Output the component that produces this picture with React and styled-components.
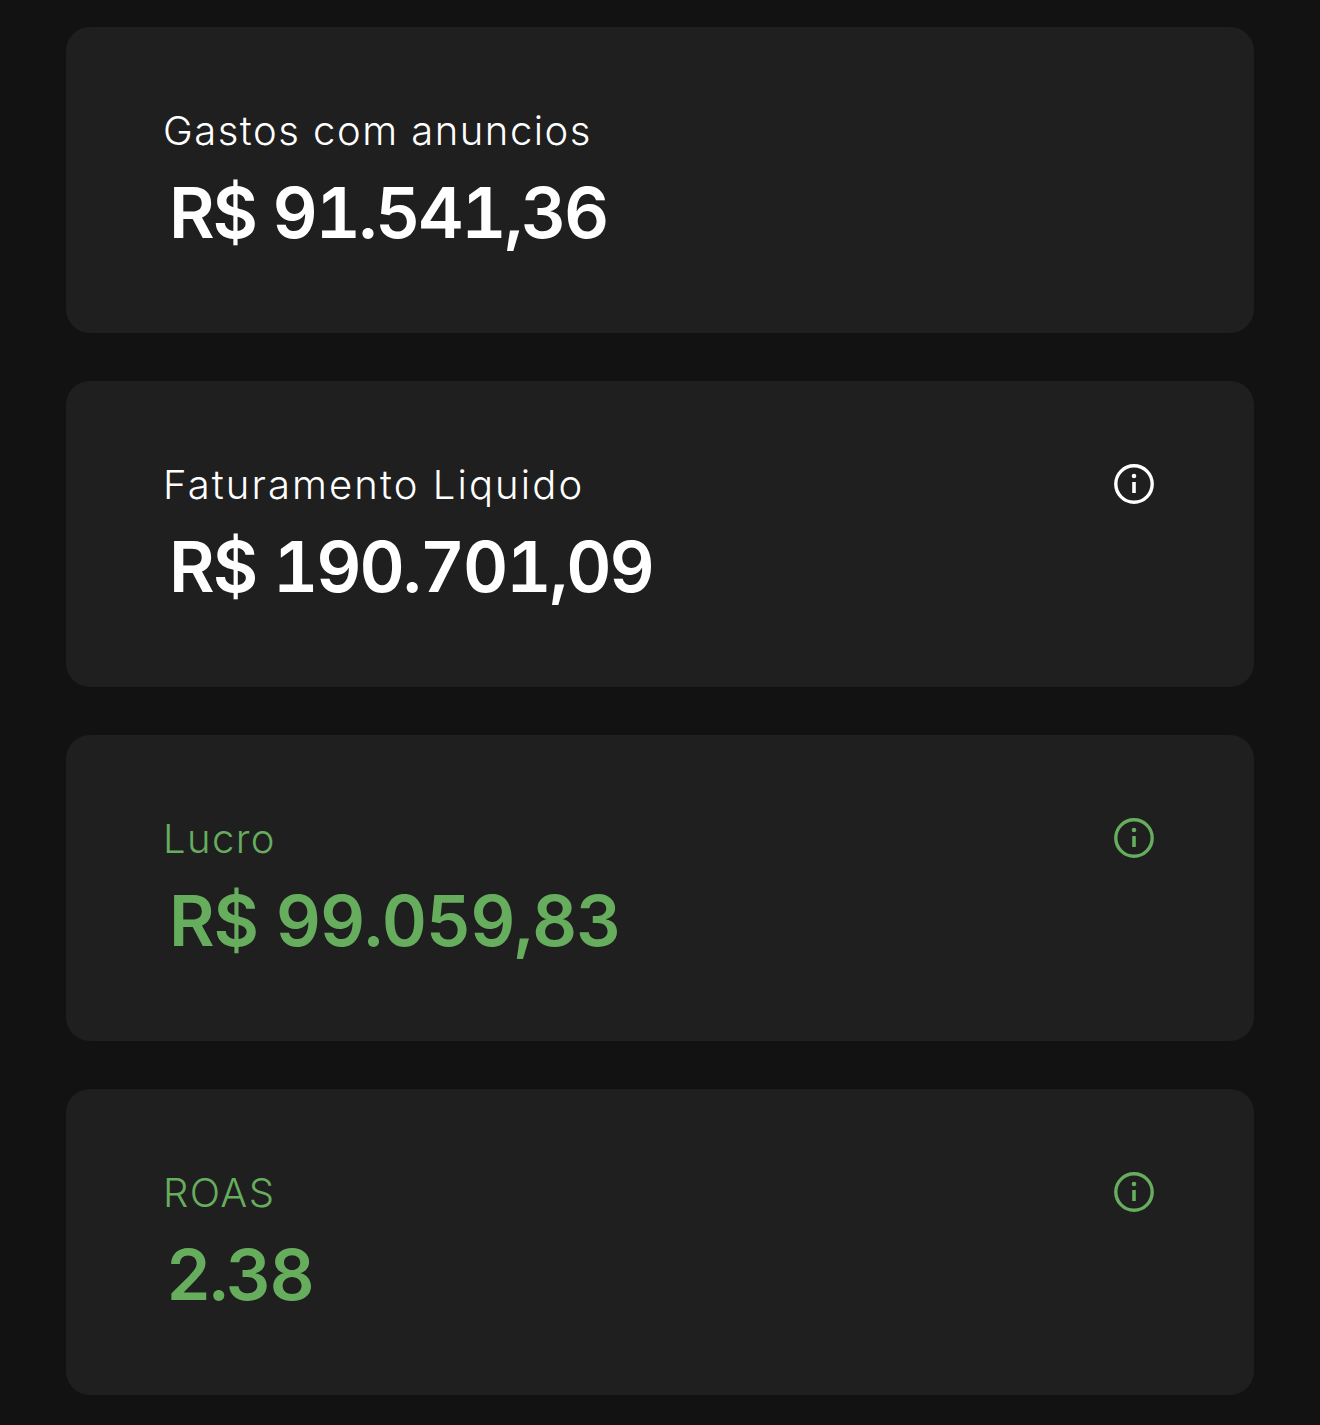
import React from 'react';
import styled, { createGlobalStyle } from 'styled-components';

const GlobalStyle = createGlobalStyle`
  html, body {
    margin: 0;
    padding: 0;
    background: #121212;
  }
`;

const Page = styled.main`
  box-sizing: border-box;
  width: 1320px;
  height: 1425px;
  overflow: hidden;
  padding: 27.4px 66px 0;
  display: flex;
  flex-direction: column;
  gap: 48px;
  background: #121212;
  font-family: Inter, "Liberation Sans", sans-serif;
`;

const Card = styled.section`
  box-sizing: border-box;
  height: 306px;
  border-radius: 24px;
  background: #1f1f1f;
  padding: 80px 100px 0 97px;
  color: ${({ $green }) => ($green ? '#66ad5e' : '#ffffff')};
`;

const TopRow = styled.div`
  display: flex;
  align-items: center;
  justify-content: space-between;
  height: 46px;
`;

const Label = styled.span`
  padding-top: 2px;
  font-size: 40px;
  font-weight: 300;
  letter-spacing: ${({ $tracking }) => $tracking}px;
  line-height: 46px;
`;

const Value = styled.div`
  margin-top: 18px;
  padding-left: ${({ $inset }) => $inset}px;
  font-size: 70px;
  font-weight: 600;
  line-height: 84px;
  font-variant-numeric: tabular-nums;
  letter-spacing: ${({ $tracking }) => $tracking}px;
`;

const InfoIcon = () => (
  <svg width="40" height="40" viewBox="0 0 40 40" fill="none" stroke="currentColor">
    <circle cx="20" cy="20" r="18.2" strokeWidth="3.4" />
    <path d="M20 18v11" strokeWidth="3.6" />
    <circle cx="20" cy="12" r="2.3" fill="currentColor" stroke="none" />
  </svg>
);

const cards = [
  { label: 'Gastos com anuncios', tracking: 1.5, value: 'R$ 91.541,36', valueTracking: -2.2, inset: 6 },
  { label: 'Faturamento Liquido', tracking: 2.1, value: 'R$ 190.701,09', info: true, valueTracking: -2, inset: 6 },
  { label: 'Lucro', tracking: 1.4, value: 'R$ 99.059,83', info: true, green: true, valueTracking: -1.1, inset: 6 },
  { label: 'ROAS', tracking: 1.4, value: '2.38', info: true, green: true, valueTracking: -2, inset: 3 },
];

export default function App() {
  return (
    <>
      <GlobalStyle />
      <Page>
        {cards.map((c) => (
          <Card key={c.label} $green={c.green}>
            <TopRow>
              <Label $tracking={c.tracking}>{c.label}</Label>
              {c.info && <InfoIcon />}
            </TopRow>
            <Value $inset={c.inset} $tracking={c.valueTracking}>{c.value}</Value>
          </Card>
        ))}
      </Page>
    </>
  );
}
